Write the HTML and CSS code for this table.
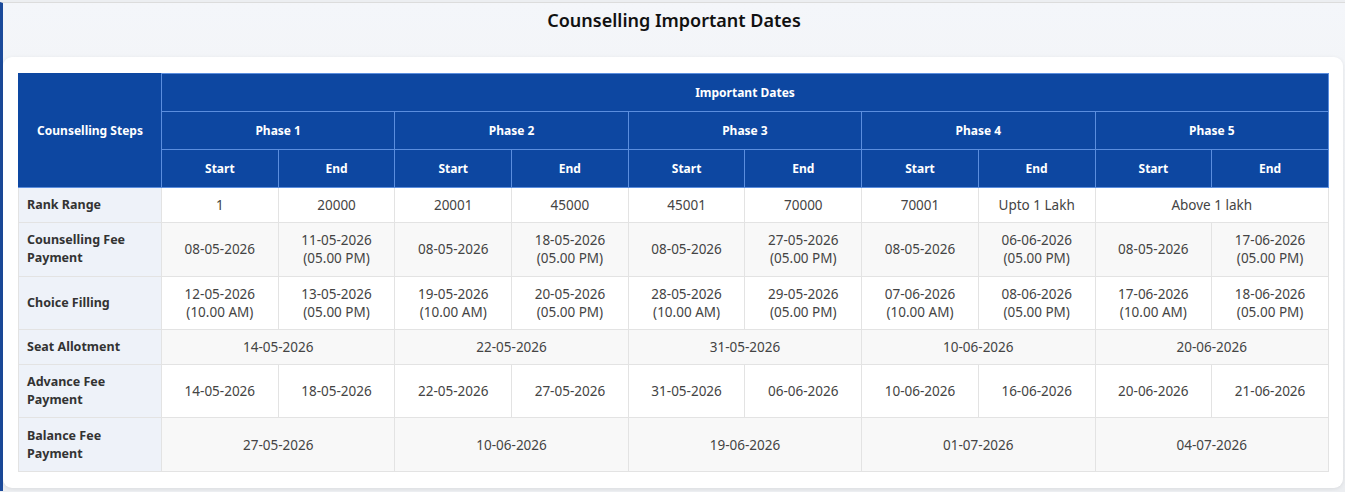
FILE: index.html
```html
<!DOCTYPE html>
<html>
<head>
<meta charset="utf-8">
<link rel="stylesheet" href="styles.css">
</head>
<body>
<div class="page">
  <h2 class="title">Counselling Important Dates</h2>
  <div class="card">
    <table class="dates">
      <colgroup>
        <col class="c-step">
        <col><col><col><col><col><col><col><col><col><col>
      </colgroup>
      <thead>
        <tr>
          <th rowspan="3" class="steps-h">Counselling Steps</th>
          <th colspan="10">Important Dates</th>
        </tr>
        <tr>
          <th colspan="2">Phase 1</th>
          <th colspan="2">Phase 2</th>
          <th colspan="2">Phase 3</th>
          <th colspan="2">Phase 4</th>
          <th colspan="2">Phase 5</th>
        </tr>
        <tr>
          <th>Start</th><th>End</th>
          <th>Start</th><th>End</th>
          <th>Start</th><th>End</th>
          <th>Start</th><th>End</th>
          <th>Start</th><th>End</th>
        </tr>
      </thead>
      <tbody>
        <tr>
          <td class="step">Rank Range</td>
          <td>1</td><td>20000</td>
          <td>20001</td><td>45000</td>
          <td>45001</td><td>70000</td>
          <td>70001</td><td>Upto 1 Lakh</td>
          <td colspan="2">Above 1 lakh</td>
        </tr>
        <tr class="alt">
          <td class="step">Counselling Fee Payment</td>
          <td>08-05-2026</td><td>11-05-2026<br>(05.00 PM)</td>
          <td>08-05-2026</td><td>18-05-2026<br>(05.00 PM)</td>
          <td>08-05-2026</td><td>27-05-2026<br>(05.00 PM)</td>
          <td>08-05-2026</td><td>06-06-2026<br>(05.00 PM)</td>
          <td>08-05-2026</td><td>17-06-2026<br>(05.00 PM)</td>
        </tr>
        <tr>
          <td class="step">Choice Filling</td>
          <td>12-05-2026<br>(10.00 AM)</td><td>13-05-2026<br>(05.00 PM)</td>
          <td>19-05-2026<br>(10.00 AM)</td><td>20-05-2026<br>(05.00 PM)</td>
          <td>28-05-2026<br>(10.00 AM)</td><td>29-05-2026<br>(05.00 PM)</td>
          <td>07-06-2026<br>(10.00 AM)</td><td>08-06-2026<br>(05.00 PM)</td>
          <td>17-06-2026<br>(10.00 AM)</td><td>18-06-2026<br>(05.00 PM)</td>
        </tr>
        <tr class="alt">
          <td class="step">Seat Allotment</td>
          <td colspan="2">14-05-2026</td>
          <td colspan="2">22-05-2026</td>
          <td colspan="2">31-05-2026</td>
          <td colspan="2">10-06-2026</td>
          <td colspan="2">20-06-2026</td>
        </tr>
        <tr>
          <td class="step">Advance Fee Payment</td>
          <td>14-05-2026</td><td>18-05-2026</td>
          <td>22-05-2026</td><td>27-05-2026</td>
          <td>31-05-2026</td><td>06-06-2026</td>
          <td>10-06-2026</td><td>16-06-2026</td>
          <td>20-06-2026</td><td>21-06-2026</td>
        </tr>
        <tr class="alt">
          <td class="step">Balance Fee Payment</td>
          <td colspan="2">27-05-2026</td>
          <td colspan="2">10-06-2026</td>
          <td colspan="2">19-06-2026</td>
          <td colspan="2">01-07-2026</td>
          <td colspan="2">04-07-2026</td>
        </tr>
      </tbody>
    </table>
  </div>
</div>
</body>
</html>
```

FILE: styles.css
```css
html, body {
  margin: 0;
  padding: 0;
  background: #eceef1;
  font-family: "Noto Sans", "Open Sans", sans-serif;
}

body {
  padding-top: 2px;
}

.page {
  border-top: 1px solid #dcdcdc;
  border-left: 3px solid #1b4a9a;
  background: linear-gradient(#f4f6fa, #f3f5f8 60px, #eceef1);
  height: 489px;
  box-sizing: border-box;
}

.title {
  margin: 0;
  height: 54px;
  padding-top: 5px;
  box-sizing: border-box;
  text-align: center;
  font-size: 18px;
  font-weight: 600;
  color: #111;
  line-height: 25px;
}

.card {
  background: #fff;
  border-radius: 9px;
  margin-right: 2px;
  padding: 16px 14px 16px 15px;
  box-shadow: 0 1px 4px rgba(0, 0, 0, 0.08);
}

.dates {
  width: 100%;
  border-collapse: collapse;
  table-layout: fixed;
  font-size: 13.5px;
  line-height: 18px;
  color: #444;
}

.c-step {
  width: 143px;
}

.dates th {
  background: #0d47a1;
  color: #fff;
  font-weight: 700;
  font-size: 12px;
  line-height: 17px;
  text-align: center;
  padding: 10px 4px;
  border: 1px solid #5b8ede;
}

.dates th.steps-h {
  border-left-color: #0d47a1;
  border-top-color: #0d47a1;
}

.dates td {
  text-align: center;
  padding: 8.2px 4px 8.1px;
  border: 1px solid #e3e3e3;
  background: #fff;
}

.dates tr.alt td {
  background: #f8f8f8;
}

.dates td.step,
.dates tr.alt td.step {
  text-align: left;
  background: #eef2f9;
  font-weight: 700;
  font-size: 12.5px;
  color: #333;
  padding-left: 8px;
}
```
